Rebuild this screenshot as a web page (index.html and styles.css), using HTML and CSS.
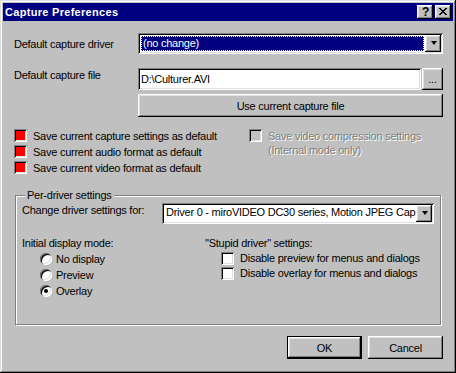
FILE: index.html
```html
<!DOCTYPE html>
<html lang="en">
<head>
    <meta charset="UTF-8">
    <title>Capture Preferences</title>
    <link rel="stylesheet" href="styles.css">
</head>
<body>

    <div class="window">
        <!-- Title bar -->
        <div class="titlebar">
            <span class="title">Capture Preferences</span>
            <div class="title-buttons">
                <button class="tbtn raised help">?</button>
                <button class="tbtn raised">
                    <svg width="8" height="7" viewBox="0 0 8 7"><path fill="#000" d="M0 0h2v1H0zM6 0h2v1H6zM1 1h2v1H1zM5 1h2v1H5zM2 2h4v1H2zM3 3h2v1H3zM2 4h4v1H2zM1 5h2v1H1zM5 5h2v1H5zM0 6h2v1H0zM6 6h2v1H6z"/></svg>
                </button>
            </div>
        </div>

        <div class="content">
            <!-- Capture driver -->
            <div class="form-row row-driver">
                <label class="field-label">Default capture driver</label>
                <div class="combo sunken">
                    <div class="combo-value"><span class="selected">(no change)</span></div>
                    <div class="combo-arrow raised"><span class="arrow"></span></div>
                </div>
            </div>

            <!-- Capture file -->
            <div class="form-row row-file">
                <label class="field-label">Default capture file</label>
                <div class="textbox sunken">D:\Culturer.AVI</div>
                <button class="btn raised browse">...</button>
            </div>
            <div class="form-row row-use">
                <button class="btn raised use-file">Use current capture file</button>
            </div>

            <!-- Save options -->
            <div class="save-options">
                <div class="check-list">
                    <div class="check"><span class="box sunken red"></span><span>Save current capture settings as default</span></div>
                    <div class="check"><span class="box sunken red"></span><span>Save current audio format as default</span></div>
                    <div class="check"><span class="box sunken red"></span><span>Save current video format as default</span></div>
                </div>
                <div class="check disabled">
                    <span class="box sunken"></span>
                    <span class="check-text">Save video compression settings<br>(Internal mode only)</span>
                </div>
            </div>

            <!-- Per-driver settings -->
            <div class="group">
                <span class="group-title">Per-driver settings</span>
                <div class="form-row driver-row">
                    <label class="driver-label">Change driver settings for:</label>
                    <div class="combo sunken driver-combo">
                        <div class="combo-value">Driver 0 - miroVIDEO DC30 series, Motion JPEG Cap</div>
                        <div class="combo-arrow raised"><span class="arrow"></span></div>
                    </div>
                </div>
                <div class="group-cols">
                    <div class="mode-col">
                        <div class="col-title">Initial display mode:</div>
                        <div class="radio"><span class="radio-dot"></span><span>No display</span></div>
                        <div class="radio"><span class="radio-dot"></span><span>Preview</span></div>
                        <div class="radio"><span class="radio-dot checked"></span><span>Overlay</span></div>
                    </div>
                    <div class="stupid-col">
                        <div class="col-title">"Stupid driver" settings:</div>
                        <div class="check small"><span class="box sunken white"></span><span>Disable preview for menus and dialogs</span></div>
                        <div class="check small"><span class="box sunken white"></span><span>Disable overlay for menus and dialogs</span></div>
                    </div>
                </div>
            </div>

            <div class="dialog-buttons">
                <button class="btn default">OK</button>
                <button class="btn raised">Cancel</button>
            </div>
        </div>
    </div>

</body>
</html>
```

FILE: styles.css
```css
* {
    box-sizing: border-box;
}
body {
    margin: 0;
    background: #c0c0c0;
    font-family: "Liberation Sans", Arial, sans-serif;
    font-size: 11px;
    letter-spacing: -0.25px;
    color: #000;
}
button {
    font: inherit;
    letter-spacing: inherit;
    color: #000;
    background: #c0c0c0;
    border: 0;
    padding: 0;
    margin: 0;
}
.raised {
    box-shadow: inset -1px -1px #000, inset 1px 1px #fff, inset -2px -2px #808080, inset 2px 2px #dfdfdf;
}
.sunken {
    box-shadow: inset 1px 1px #808080, inset -1px -1px #fff, inset 2px 2px #000, inset -2px -2px #dfdfdf;
}

/* window frame */
.window {
    width: 456px;
    height: 373px;
    padding: 3px;
    background: #c0c0c0;
    box-shadow: inset -1px -1px #000, inset 1px 1px #dfdfdf, inset -2px -2px #808080, inset 2px 2px #fff;
}
.titlebar {
    height: 18px;
    background: #000080;
    display: flex;
    justify-content: space-between;
    align-items: flex-start;
    padding: 0 2px;
}
.title {
    color: #fff;
    font-weight: bold;
    line-height: 18px;
    letter-spacing: 0.3px;
}
.title-buttons {
    display: flex;
    gap: 2px;
    margin-top: 2px;
}
.tbtn {
    width: 16px;
    height: 14px;
    display: flex;
    align-items: center;
    justify-content: center;
    padding-bottom: 1px;
}
.help {
    font-weight: bold;
    font-size: 12px;
    line-height: 14px;
    padding: 0 0 1px 1px;
}

/* content */
.content {
    padding: 12px 10px 0 11px;
}
.form-row {
    display: flex;
    align-items: flex-start;
}
.field-label {
    width: 124px;
    line-height: 13px;
}
.row-driver .field-label {
    padding-top: 5px;
}
.row-file {
    margin-top: 14px;
}
.row-file .field-label {
    padding-top: 1px;
}
.row-use {
    margin-top: 4px;
    padding-left: 124px;
}

/* combo boxes */
.combo {
    flex: 1;
    height: 21px;
    padding: 2px;
    display: flex;
    background: #fff;
}
.combo-value {
    flex: 1;
    overflow: hidden;
    white-space: nowrap;
    line-height: 15px;
}
.selected {
    display: block;
    margin: 1px;
    height: 15px;
    background: #000080;
    color: #fff;
    border: 1px dotted #fff;
    line-height: 13px;
    padding-left: 1px;
}
.combo-arrow {
    width: 16px;
    height: 17px;
    background: #c0c0c0;
    display: flex;
    align-items: center;
    justify-content: center;
    padding-bottom: 2px;
}
.arrow {
    width: 0;
    height: 0;
    border-left: 3.5px solid transparent;
    border-right: 3.5px solid transparent;
    border-top: 4px solid #000;
    margin-left: 1px;
}

.textbox {
    flex: 1;
    height: 22px;
    margin-right: 1px;
    background: #fff;
    padding-left: 3px;
    line-height: 22px;
}
.btn {
    height: 23px;
    line-height: 20px;
    text-align: center;
}
.browse {
    width: 21px;
    height: 22px;
}
.use-file {
    width: 305px;
}

/* checkboxes */
.save-options {
    margin-top: 11px;
    display: grid;
    grid-template-columns: 235px 1fr;
}
.check {
    display: flex;
    align-items: flex-start;
    gap: 6px;
    line-height: 16px;
    height: 16px;
}
.box {
    width: 13px;
    height: 13px;
    margin-top: 1px;
    flex-shrink: 0;
    background: #c0c0c0;
}
.box.red {
    background: #ff0000;
}
.box.white {
    background: #fff;
}
.disabled {
    color: #808080;
    text-shadow: 1px 1px 0 #fff;
    height: auto;
}
.check-text {
    line-height: 14px;
    padding-top: 1px;
}

/* group box */
.group {
    margin: 19px 2px 0 1px;
    border: 1px solid #808080;
    box-shadow: inset 1px 1px #fff, 1px 1px #fff;
    padding: 0 6px 25px 6px;
}
.group-title {
    display: block;
    width: fit-content;
    margin: -7px 0 0 3px;
    padding: 0 2px;
    line-height: 13px;
    background: #c0c0c0;
}
.driver-row {
    margin-top: 1px;
}
.driver-label {
    width: 140px;
    line-height: 13px;
    padding-top: 1px;
}
.driver-combo {
    flex: none;
    width: 272px;
}
.driver-combo .combo-value {
    padding-left: 2px;
    line-height: 15px;
}
.group-cols {
    margin-top: 13px;
    display: grid;
    grid-template-columns: 183px 1fr;
}
.col-title {
    line-height: 13px;
    margin-bottom: 1px;
}
.radio {
    display: flex;
    align-items: flex-start;
    gap: 4px;
    padding-left: 18px;
    height: 16px;
    line-height: 16px;
}
.radio-dot {
    width: 12px;
    height: 12px;
    margin-top: 2px;
    border-radius: 50%;
    background: #fff;
    box-shadow: inset 1px 1px #808080, inset -1px -1px #fff, inset 2px 2px #000, inset -2px -2px #dfdfdf;
    display: flex;
    align-items: center;
    justify-content: center;
}
.radio-dot.checked::after {
    content: "";
    width: 4px;
    height: 4px;
    border-radius: 50%;
    background: #000;
}
.check.small {
    padding-left: 16px;
    height: 15px;
    line-height: 15px;
    gap: 6px;
}

/* bottom buttons */
.dialog-buttons {
    display: flex;
    justify-content: flex-end;
    gap: 6px;
    margin-top: 11px;
}
.dialog-buttons .btn {
    width: 75px;
}
.default {
    box-shadow: inset 0 0 0 1px #000, inset -2px -2px #000, inset 2px 2px #fff, inset -3px -3px #808080, inset 3px 3px #dfdfdf;
}
```
